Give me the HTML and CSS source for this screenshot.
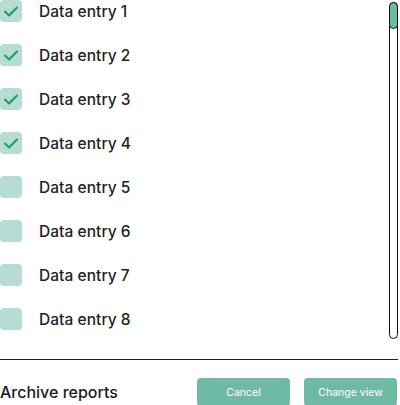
FILE: index.html
```html
<!DOCTYPE html>
<html>
<head>
<meta charset="utf-8">
<link rel="stylesheet" href="styles.css">
</head>
<body>
<div class="panel">
  <div class="list-area">
    <ul class="list">
      <li class="row"><span class="box checked"><svg viewBox="0 0 22 22"><path d="M5 11.5 L9 15.5 L17 7.5"/></svg></span><span class="label">Data entry 1</span></li>
      <li class="row"><span class="box checked"><svg viewBox="0 0 22 22"><path d="M5 11.5 L9 15.5 L17 7.5"/></svg></span><span class="label">Data entry 2</span></li>
      <li class="row"><span class="box checked"><svg viewBox="0 0 22 22"><path d="M5 11.5 L9 15.5 L17 7.5"/></svg></span><span class="label">Data entry 3</span></li>
      <li class="row"><span class="box checked"><svg viewBox="0 0 22 22"><path d="M5 11.5 L9 15.5 L17 7.5"/></svg></span><span class="label">Data entry 4</span></li>
      <li class="row"><span class="box"></span><span class="label">Data entry 5</span></li>
      <li class="row"><span class="box"></span><span class="label">Data entry 6</span></li>
      <li class="row"><span class="box"></span><span class="label">Data entry 7</span></li>
      <li class="row"><span class="box"></span><span class="label">Data entry 8</span></li>
    </ul>
    <div class="scrollbar"><div class="thumb"></div></div>
  </div>
  <hr class="divider">
  <div class="footer">
    <span class="title">Archive reports</span>
    <div class="actions">
      <button class="btn">Cancel</button>
      <button class="btn">Change view</button>
    </div>
  </div>
</div>
</body>
</html>
```
FILE: styles.css
```css
html, body {
  margin: 0;
  padding: 0;
  background: #ffffff;
}
body {
  font-family: Inter, "Noto Sans", sans-serif;
  color: #222222;
  width: 400px;
  height: 405px;
  overflow: hidden;
}
.panel {
  display: flex;
  flex-direction: column;
  width: 398px;
}
.list-area {
  display: flex;
  height: 340px;
}
.list {
  list-style: none;
  margin: 0;
  padding: 0;
  flex: 1;
  display: flex;
  flex-direction: column;
  gap: 22px;
}
.row {
  display: flex;
  align-items: center;
  gap: 17px;
  height: 22px;
}
.box {
  width: 22px;
  height: 22px;
  border-radius: 4px;
  background: #b6dcd3;
  display: flex;
  flex: none;
}
.box svg {
  width: 22px;
  height: 22px;
}
.box path {
  fill: none;
  stroke: #17996a;
  stroke-width: 2;
  stroke-linecap: round;
  stroke-linejoin: round;
}
.label {
  font-size: 15.5px;
  font-weight: 500;
  letter-spacing: 0.05px;
  color: #222222;
}
.scrollbar {
  width: 7px;
  margin-top: 2px;
  height: 335px;
  border: 1px solid #111111;
  border-radius: 5px;
  box-sizing: content-box;
}
.thumb {
  height: 25px;
  margin: -1px;
  border: 1px solid #111111;
  border-radius: 5px;
  background: #6fb9a3;
}
.divider {
  margin: 19px 0 0 0;
  border: 0;
  border-top: 1px solid #222222;
  height: 0;
}
.footer {
  display: flex;
  align-items: center;
  justify-content: space-between;
  margin-top: 18px;
}
.title {
  font-size: 16px;
  font-weight: 500;
  color: #1a1a1a;
}
.actions {
  display: flex;
  gap: 14px;
  margin-right: 1px;
}
.btn {
  width: 93px;
  height: 28px;
  border: 0;
  border-radius: 4px;
  background: #6fbaa4;
  color: #ffffff;
  font-family: Inter, sans-serif;
  font-size: 10.5px;
  padding: 0;
}
```
